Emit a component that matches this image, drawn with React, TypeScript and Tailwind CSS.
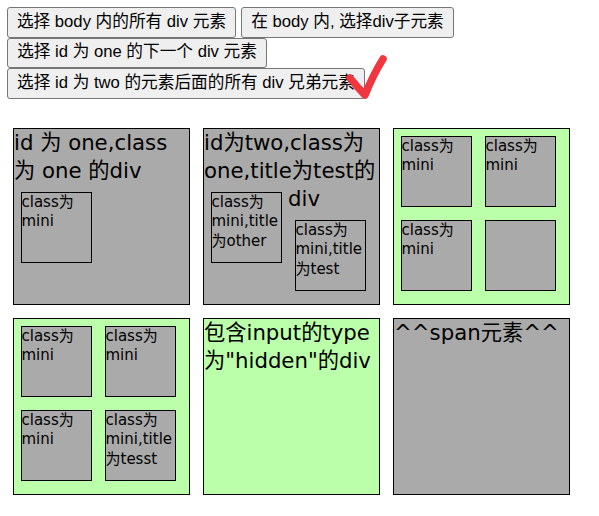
const boxFont = { fontFamily: '"DejaVu Sans", "Noto Sans CJK SC", sans-serif' };

function Btn({ w, children }: { w: string; children: React.ReactNode }) {
  return (
    <button
      className={`${w} h-[30.5px] shrink-0 rounded-[3px] border border-[#767676] bg-[#efefef] px-2 text-[16.67px] leading-none text-black whitespace-nowrap`}
      style={{ fontFamily: '"Liberation Sans", "Noto Sans CJK SC", sans-serif' }}
    >
      {children}
    </button>
  );
}

function Box({ green, children }: { green?: boolean; children: React.ReactNode }) {
  return (
    <div
      className={`w-[177px] h-[177px] ml-[6px] mr-[7px] my-[6.5px] border border-black text-[21.25px] leading-[1.32] text-black overflow-visible ${
        green ? "bg-[#bbffaa]" : "bg-[#aaaaaa]"
      }`}
    >
      {children}
    </div>
  );
}

function Mini({ children }: { children?: React.ReactNode }) {
  return (
    <div className="float-left w-[71px] h-[71px] m-[6.5px] border border-black bg-[#aaaaaa] text-[15px] leading-[1.32]">
      {children}
    </div>
  );
}

export default function App() {
  return (
    <div className="relative w-[599px] h-[516px] bg-white px-[7px] pt-[7px]" style={boxFont}>
      <div className="flex flex-col">
        <div className="flex gap-[5px]">
          <Btn w="w-[229px]">选择 body 内的所有 div 元素</Btn>
          <Btn w="w-[213px]">在 body 内, 选择div子元素</Btn>
        </div>
        <div className="flex">
          <Btn w="w-[260px]">选择 id 为 one 的下一个 div 元素</Btn>
        </div>
        <div className="flex">
          <Btn w="w-[358px]">选择 id 为 two 的元素后面的所有 div 兄弟元素</Btn>
        </div>
      </div>

      {/* red tick over the last button */}
      <svg className="absolute left-[344px] top-[52px]" width="48" height="50" viewBox="0 0 48 50">
        <path
          d="M6 26 Q14 36 21 43 Q29 23 39 7"
          fill="none"
          stroke="#f0363e"
          strokeWidth="7.5"
          strokeLinecap="round"
          strokeLinejoin="round"
        />
      </svg>

      <div className="mt-[23px] flex flex-wrap w-[585px]">
        <Box>
          id 为 one,class 为 one 的div
          <Mini>class为mini</Mini>
        </Box>
        <Box>
          id为two,class为one,title为test的div
          <Mini>class为mini,title为other</Mini>
          <Mini>class为mini,title为test</Mini>
        </Box>
        <Box green>
          <Mini>class为mini</Mini>
          <Mini>class为mini</Mini>
          <Mini>class为mini</Mini>
          <Mini />
        </Box>
        <Box green>
          <Mini>class为mini</Mini>
          <Mini>class为mini</Mini>
          <Mini>class为mini</Mini>
          <Mini>class为mini,title为tesst</Mini>
        </Box>
        <Box green>包含input的type为"hidden"的div</Box>
        <Box>^^span元素^^</Box>
      </div>
    </div>
  );
}
